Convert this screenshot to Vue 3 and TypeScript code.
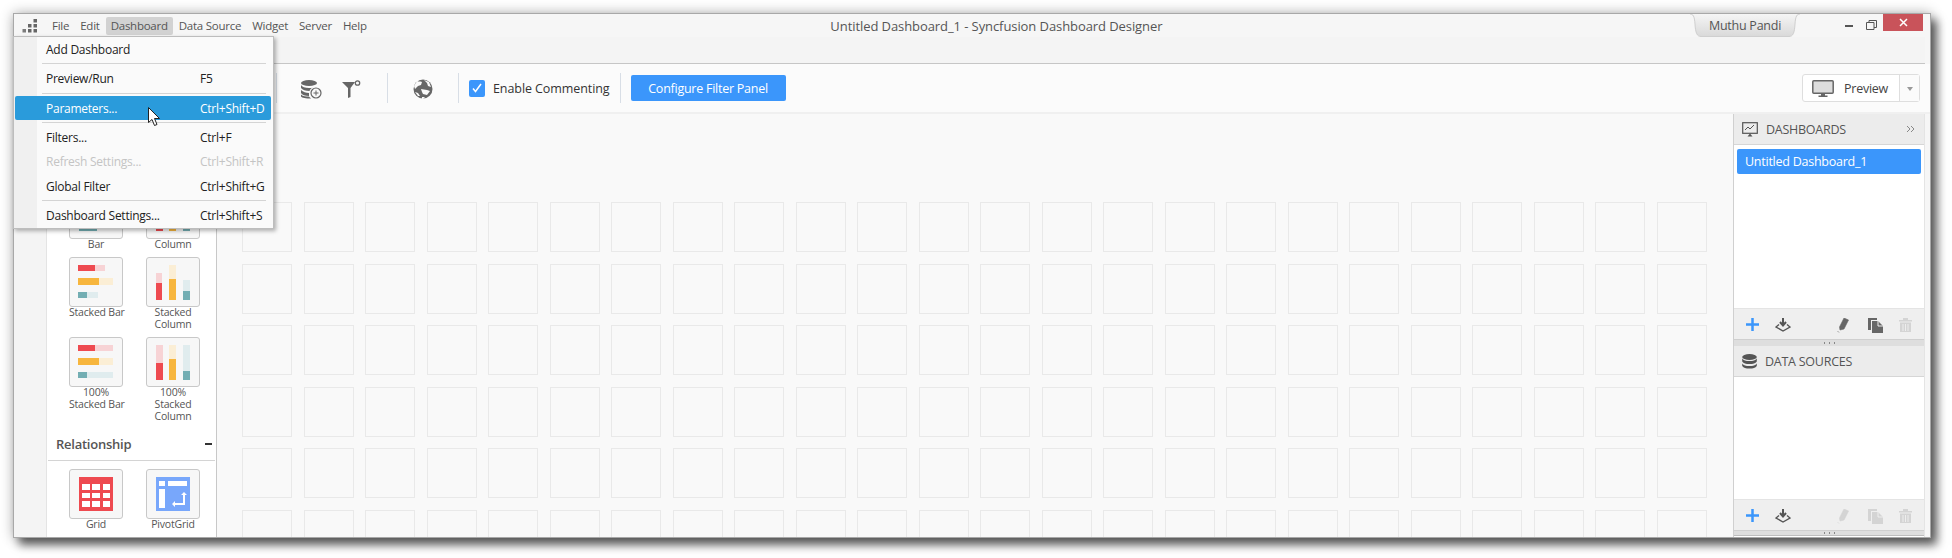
<script setup lang="ts">
interface MenuRow { label: string; key?: string; kind?: string; sepAfter?: boolean }
const topMenu = ['File', 'Edit', 'Dashboard', 'Data Source', 'Widget', 'Server', 'Help']
const rows: MenuRow[] = [
  { label: 'Add Dashboard', sepAfter: true },
  { label: 'Preview/Run', key: 'F5', kind: 'tall', sepAfter: true },
  { label: 'Parameters...', key: 'Ctrl+Shift+D', kind: 'active', sepAfter: true },
  { label: 'Filters...', key: 'Ctrl+F' },
  { label: 'Refresh Settings...', key: 'Ctrl+Shift+R', kind: 'disabled' },
  { label: 'Global Filter', key: 'Ctrl+Shift+G', sepAfter: true },
  { label: 'Dashboard Settings...', key: 'Ctrl+Shift+S' }
]
const cells = Array.from({ length: 144 }, (_, i) => i)
</script>

<template>
  <div class="page">
    <div class="window">
      <header class="titlebar">
        <svg class="logo" width="16" height="16" viewBox="0 0 16 16">
          <g fill="#666">
            <rect x="11.500" y="1" width="3.500" height="3.500" />
            <rect x="6" y="6" width="3.500" height="3.500" />
            <rect x="11.500" y="6" width="3.500" height="3.500" />
            <rect x=".5" y="11" width="3.500" height="3.500" opacity=".85" />
            <rect x="6" y="11" width="3.500" height="3.500" />
            <rect x="11.500" y="11" width="3.500" height="3.500" />
          </g>
        </svg>
        <nav class="topmenu">
          <span v-for="m in topMenu" :key="m" class="topitem" :class="{ open: m === 'Dashboard' }">{{ m }}</span>
        </nav>
        <div class="wintitle">Untitled Dashboard_1 - Syncfusion Dashboard Designer</div>
        <div class="user">
          <svg class="user-shape" width="110" height="23" viewBox="0 0 110 23">
            <defs>
              <linearGradient id="userfill" x1="0" y1="0" x2="0" y2="1">
                <stop offset="0" stop-color="#f5f5f5" />
                <stop offset="1" stop-color="#d9d9d9" />
              </linearGradient>
            </defs>
            <path d="M0 0C3 0 4.500 2 5 10C5.500 19 7 22.500 11 22.500H99C103 22.500 104.500 19 105 10C105.500 2 107 0 110 0" fill="url(#userfill)" stroke="#cfcfcf" />
          </svg>
          <span class="user-name">Muthu Pandi</span>
        </div>
        <div class="controls">
          <span class="min"></span>
          <svg class="restore" width="11" height="10" viewBox="0 0 11 10"><path d="M.5 2.500h7.500v7h-7.500zM3 2.500V.5h7.500v7H8" fill="none" stroke="#555" /></svg>
          <span class="close">
            <svg width="9" height="9" viewBox="0 0 9 9"><path d="M1 1l7 7M8 1L1 8" stroke="#fff" stroke-width="1.500" /></svg>
          </span>
        </div>
      </header>

      <div class="tabstrip"></div>

      <div class="toolbar">
        <span class="vsep"></span>
        <div class="tb-group first">
          <svg width="21" height="19" viewBox="0 0 21 19">
            <g fill="#666">
              <ellipse cx="8" cy="3" rx="8" ry="3" />
              <path d="M0 5c1 2 4 3 8 3 2 0 3 0 4.500-1-2 1-3.500 2-4 4-4 0-7-1-8.500-3zM0 10c2 2 5 3 8 3v3c-4 0-7-1-8-3zM0 14.500c2 2 5 2 8 2 0 0 1 1 2 2-5 0-9-.5-10-2z" />
            </g>
            <circle cx="15" cy="13" r="5" fill="#f9f9f9" stroke="#666" stroke-width="1.200" />
            <path d="M12.500 13h5M15 10.500v5" stroke="#666" />
          </svg>
          <svg width="19" height="19" viewBox="0 0 19 19">
            <path d="M0 2h13l-4.500 6v9l-2.500 1V8z" fill="#666" />
            <circle cx="15.500" cy="3" r="2.200" fill="none" stroke="#666" stroke-width="1.300" />
          </svg>
        </div>
        <span class="vsep"></span>
        <div class="tb-group globe">
          <svg width="20" height="21" viewBox="0 0 20 21">
            <circle cx="10" cy="10" r="9.500" fill="#666" />
            <path d="M4 2c2 1 3 0 5 1l-1 3-3 1-3 3-1-3zM11 1l5 2 2 5-3-1-1-3zM8 10l6 1 3 1-3 4-4-1-1-2zM2 13l3 1 2 3-2 0zM9 21l3-3h-3z" fill="#f9f9f9" />
          </svg>
        </div>
        <span class="vsep"></span>
        <label class="check">
          <span class="box">
            <svg width="12" height="12" viewBox="0 0 12 12"><path d="M2 6.500l2.500 3L10 2" fill="none" stroke="#fff" stroke-width="1.500" /></svg>
          </span>
          Enable Commenting
        </label>
        <span class="vsep tight"></span>
        <button class="configure">Configure Filter Panel</button>
        <div class="preview">
          <span class="preview-main">
            <svg width="22" height="17" viewBox="0 0 22 17">
              <rect x=".8" y=".8" width="20.400" height="12.400" rx="1" fill="#ddd" stroke="#666" stroke-width="1.500" />
              <path d="M9 14h4v1.500h2.500V17h-9v-1.500H9z" fill="#666" />
            </svg>
            Preview
          </span>
          <span class="preview-arrow"></span>
        </div>
      </div>

      <div class="workspace">
        <div class="rail"></div>
        <aside class="sidebar">
          <div class="tiles">
            <div class="tile-cell">
              <div class="tile"><svg width="34" height="34" viewBox="0 0 34 34"><rect x="0" y="31" width="18" height="3" fill="#73aeb3" /></svg></div>
              <div class="tile-label">Bar</div>
            </div>
            <div class="tile-cell">
              <div class="tile"><svg width="34" height="34" viewBox="0 0 34 34"><rect x="0" y="31" width="7" height="3" fill="#ee4a50" /><rect x="13" y="31" width="7" height="3" fill="#f7b63e" /><rect x="27" y="31" width="7" height="3" fill="#73aeb3" /></svg></div>
              <div class="tile-label">Column</div>
            </div>
            <div class="tile-cell">
              <div class="tile">
                <svg width="36" height="34" viewBox="0 0 36 34">
                  <rect x="0" y="0" width="27" height="6" fill="#f7d3d5" /><rect x="0" y="0" width="17" height="6" fill="#ee4a50" />
                  <rect x="0" y="13" width="35" height="7" fill="#fbeed5" /><rect x="0" y="13" width="21" height="7" fill="#f7b63e" />
                  <rect x="0" y="27" width="20" height="6" fill="#e0ecee" /><rect x="0" y="27" width="9" height="6" fill="#73aeb3" />
                </svg>
              </div>
              <div class="tile-label">Stacked Bar</div>
            </div>
            <div class="tile-cell">
              <div class="tile">
                <svg width="34" height="35" viewBox="0 0 34 35">
                  <rect x="0" y="8" width="6" height="27" fill="#f7d3d5" /><rect x="0" y="18" width="6" height="17" fill="#ee4a50" />
                  <rect x="13" y="0" width="7" height="35" fill="#fbeed5" /><rect x="13" y="14" width="7" height="21" fill="#f7b63e" />
                  <rect x="27" y="15" width="7" height="20" fill="#e0ecee" /><rect x="27" y="26" width="7" height="9" fill="#73aeb3" />
                </svg>
              </div>
              <div class="tile-label">Stacked<br />Column</div>
            </div>
            <div class="tile-cell">
              <div class="tile">
                <svg width="36" height="34" viewBox="0 0 36 34">
                  <rect x="0" y="0" width="35" height="6" fill="#f7d3d5" /><rect x="0" y="0" width="17" height="6" fill="#ee4a50" />
                  <rect x="0" y="13" width="35" height="7" fill="#fbeed5" /><rect x="0" y="13" width="21" height="7" fill="#f7b63e" />
                  <rect x="0" y="27" width="35" height="6" fill="#e0ecee" /><rect x="0" y="27" width="9" height="6" fill="#73aeb3" />
                </svg>
              </div>
              <div class="tile-label">100%<br />Stacked Bar</div>
            </div>
            <div class="tile-cell">
              <div class="tile">
                <svg width="34" height="35" viewBox="0 0 34 35">
                  <rect x="0" y="0" width="7" height="35" fill="#f7d3d5" /><rect x="0" y="18" width="7" height="17" fill="#ee4a50" />
                  <rect x="13" y="0" width="7" height="35" fill="#fbeed5" /><rect x="13" y="14" width="7" height="21" fill="#f7b63e" />
                  <rect x="27" y="0" width="7" height="35" fill="#e0ecee" /><rect x="27" y="26" width="7" height="9" fill="#73aeb3" />
                </svg>
              </div>
              <div class="tile-label">100%<br />Stacked<br />Column</div>
            </div>
          </div>
          <div class="section-head"><span>Relationship</span><i class="collapse"></i></div>
          <div class="tiles second">
            <div class="tile-cell">
              <div class="tile">
                <svg width="34" height="34" viewBox="0 0 34 34">
                  <rect width="34" height="34" fill="#ee4a50" />
                  <g fill="#fff">
                    <rect x="3" y="7" width="8" height="6" /><rect x="13" y="7" width="8" height="6" /><rect x="24" y="7" width="7" height="6" />
                    <rect x="3" y="16" width="8" height="5" /><rect x="13" y="16" width="8" height="5" /><rect x="24" y="16" width="7" height="5" />
                    <rect x="3" y="24" width="8" height="6" /><rect x="13" y="24" width="8" height="6" /><rect x="24" y="24" width="7" height="6" />
                  </g>
                </svg>
              </div>
              <div class="tile-label">Grid</div>
            </div>
            <div class="tile-cell">
              <div class="tile">
                <svg width="34" height="34" viewBox="0 0 34 34">
                  <rect width="34" height="34" fill="#78a7fb" />
                  <g fill="#fff">
                    <rect x="3" y="4" width="6" height="5" /><rect x="12" y="4" width="19" height="5" /><rect x="3" y="12" width="6" height="19" />
                    <path d="M19 26h8v-8h-2l3-3 3 3h-2v10h-10v2l-3-3 3-3z" />
                  </g>
                </svg>
              </div>
              <div class="tile-label">PivotGrid</div>
            </div>
            <div class="tile-cell"><div class="tile"></div></div>
            <div class="tile-cell"><div class="tile"></div></div>
          </div>
        </aside>

        <main class="canvas">
          <div class="cellgrid">
            <div v-for="c in cells" :key="c" class="cell"></div>
          </div>
        </main>

        <aside class="panel">
          <div class="panel-head">
            <svg width="16" height="16" viewBox="0 0 16 16">
              <rect x=".7" y="1.700" width="14.600" height="10.600" fill="none" stroke="#555" stroke-width="1.200" />
              <path d="M3 9l3-3 2 2 4-4" fill="none" stroke="#555" />
              <path d="M8 12.500l2.500 3h-5z" fill="#555" />
            </svg>
            <span>DASHBOARDS</span>
            <svg class="chev" width="9" height="8" viewBox="0 0 9 8"><path d="M1 1l3 3-3 3M5 1l3 3-3 3" fill="none" stroke="#888" /></svg>
          </div>
          <div class="panel-list">
            <div class="list-item">Untitled Dashboard_1</div>
          </div>
          <div class="panel-foot">
            <svg class="plus" width="13" height="13" viewBox="0 0 13 13"><path d="M0 6.500h13M6.500 0v13" stroke="#3b96fb" stroke-width="2.500" /></svg>
            <svg class="import" width="16" height="14" viewBox="0 0 16 14"><path d="M8 0v6M5 4l3 3.500L11 4" fill="none" stroke="#555" stroke-width="2" /><path d="M4 6.500L1 9l7 4 7-4-3-2.500" fill="none" stroke="#555" stroke-width="1.400" /></svg>
            <svg class="edit" width="12" height="15" viewBox="0 0 12 15"><path d="M7 0l4.500 2-4.500 9-4 1-.5-3zM.5 13l1.500 1.500" fill="#666" stroke="#666" stroke-width=".6" /></svg>
            <svg class="copy" width="15" height="15" viewBox="0 0 15 15"><path d="M0 0h9v2H3v10H0z" fill="#666" /><path d="M4 3h6l5 5v7H4z" fill="#666" /><path d="M10 3v5h5" fill="none" stroke="#eee" /></svg>
            <svg class="trash" width="13" height="14" viewBox="0 0 13 14"><path d="M0 2h13v1.500H0zM4 0h5v2H4zM1 4.500h11V14H1z" fill="#d4d4d4" /><path d="M4 6v7M6.500 6v7M9 6v7" stroke="#eee" /></svg>
          </div>
          <div class="splitter"><span class="dots"></span></div>
          <div class="panel-head second">
            <svg width="15" height="15" viewBox="0 0 15 15">
              <g fill="#555">
                <ellipse cx="7.500" cy="3" rx="7.300" ry="3" />
                <path d="M.2 4.500c1.500 2 3.500 2.500 7.300 2.500s5.800-.5 7.300-2.500v3c-1.500 2-3.500 2.500-7.300 2.500S1.700 9.500.2 7.500zM.2 9.500c1.500 2 3.500 2.500 7.300 2.500s5.800-.5 7.300-2.500V12c-1.500 2-3.500 2.500-7.300 2.500S1.700 14 .2 12z" />
              </g>
            </svg>
            <span>DATA SOURCES</span>
          </div>
          <div class="panel-list sources"></div>
          <div class="panel-foot">
            <svg class="plus" width="13" height="13" viewBox="0 0 13 13"><path d="M0 6.500h13M6.500 0v13" stroke="#3b96fb" stroke-width="2.500" /></svg>
            <svg class="import" width="16" height="14" viewBox="0 0 16 14"><path d="M8 0v6M5 4l3 3.500L11 4" fill="none" stroke="#555" stroke-width="2" /><path d="M4 6.500L1 9l7 4 7-4-3-2.500" fill="none" stroke="#555" stroke-width="1.400" /></svg>
            <svg class="edit" width="12" height="15" viewBox="0 0 12 15"><path d="M7 0l4.500 2-4.500 9-4 1-.5-3zM.5 13l1.500 1.500" fill="#d4d4d4" stroke="#d4d4d4" stroke-width=".6" /></svg>
            <svg class="copy" width="15" height="15" viewBox="0 0 15 15"><path d="M0 0h9v2H3v10H0z" fill="#d4d4d4" /><path d="M4 3h6l5 5v7H4z" fill="#d4d4d4" /><path d="M10 3v5h5" fill="none" stroke="#eee" /></svg>
            <svg class="trash" width="13" height="14" viewBox="0 0 13 14"><path d="M0 2h13v1.500H0zM4 0h5v2H4zM1 4.500h11V14H1z" fill="#d4d4d4" /><path d="M4 6v7M6.500 6v7M9 6v7" stroke="#eee" /></svg>
          </div>
          <div class="splitter last"><span class="dots"></span></div>
        </aside>
      </div>

      <div class="dropdown">
        <template v-for="r in rows" :key="r.label">
          <div class="ditem" :class="r.kind">
            <span class="dlabel">{{ r.label }}</span>
            <span class="dkey">{{ r.key }}</span>
          </div>
          <div v-if="r.sepAfter" class="dsep"></div>
        </template>
        <svg class="cursor" width="13" height="20" viewBox="0 0 13 20">
          <path d="M.5.5v15l3.500-3 2.500 6 2.500-1-2.500-6h5z" fill="#fff" stroke="#222" />
        </svg>
      </div>
    </div>
  </div>
</template>

<style>
html, body { margin: 0; background: #fff; }
</style>

<style scoped>
.page {
  width: 1952px;
  height: 558px;
  padding: 13px 0 0 13px;
  box-sizing: border-box;
  overflow: hidden;
  font-family: "Open Sans", "Noto Sans", sans-serif;
  font-size: 12px;
  letter-spacing: -0.25px;
  color: #333;
}
.window {
  position: relative;
  width: 1918px;
  height: 525px;
  box-sizing: border-box;
  border: 1px solid #a8a8a8;
  background: #f6f6f6;
  display: flex;
  flex-direction: column;
  box-shadow: 6px 7px 9px rgba(0, 0, 0, 0.6), 0 0 12px rgba(0, 0, 0, 0.3);
}
.titlebar {
  height: 23px;
  display: flex;
  align-items: center;
  padding-left: 8px;
  background: #f6f6f6;
  color: #555;
}
.logo { margin-right: 9px; flex: none; }
.topmenu { display: flex; font-size: 11.500px; }
.topitem { padding: 2px 5px; height: 14px; line-height: 14px; border-radius: 2px; margin-right: 1px; white-space: nowrap; }
.topitem.open { background: #d2d2d2; }
.wintitle { flex: 1; text-align: center; padding-right: 70px; color: #555; font-size: 13px; letter-spacing: -0.08px; white-space: nowrap; }
.user {
  position: relative;
  width: 110px;
  height: 23px;
  margin-right: 45px;
  flex: none;
  display: flex;
  align-items: center;
  justify-content: center;
  color: #555;
  font-size: 12.500px;
}
.user-shape { position: absolute; left: 0; top: 0; }
.user-name { position: relative; }
.controls { display: flex; align-items: flex-start; height: 23px; width: 78px; margin-right: 7px; flex: none; }
.min { width: 8px; height: 2px; background: #555; margin: 11px 13px 0 0; }
.restore { margin: 6px 6px 0 0; }
.close {
  width: 40px;
  height: 17px;
  background: #c9535a;
  display: flex;
  align-items: center;
  justify-content: center;
  flex: none;
}
.tabstrip {
  height: 27px;
  margin-right: 5px;
  box-sizing: border-box;
  border-bottom: 1px solid #c6c6c6;
  background: #f4f4f4;
}
.toolbar {
  height: 50px;
  box-sizing: border-box;
  display: flex;
  align-items: center;
  background: #fbfbfb;
  border-bottom: 2px solid #f0f0f0;
  padding-left: 262px;
}
.tb-group { display: flex; align-items: center; gap: 20px; margin-top: 2px; }
.tb-group.first { width: 110px; padding-left: 24px; box-sizing: border-box; }
.tb-group.globe { width: 70px; justify-content: center; }
.vsep { width: 1px; height: 30px; background: #d8dee6; flex: none; }
.vsep.tight { margin-left: 10px; }
.check { display: flex; align-items: center; gap: 8px; margin-left: 10px; font-size: 12.500px; letter-spacing: -0.08px; color: #333; white-space: nowrap; }
.box {
  width: 16px;
  height: 17px;
  background: #3b96fb;
  border-radius: 2px;
  display: flex;
  align-items: center;
  justify-content: center;
}
.configure {
  margin-left: 10px;
  width: 155px;
  height: 26px;
  background: #3b96fb;
  border: 0;
  border-radius: 2px;
  color: #fff;
  font: inherit;
  font-size: 12.500px;
  letter-spacing: -0.25px;
  padding: 0;
}
.preview {
  margin-left: auto;
  margin-right: 10px;
  display: flex;
  height: 28px;
  border: 1px solid #dedede;
  border-radius: 3px;
  background: #fff;
  box-sizing: border-box;
}
.preview-main {
  width: 97px;
  display: flex;
  align-items: center;
  gap: 10px;
  padding-left: 9px;
  box-sizing: border-box;
  border-right: 1px solid #dedede;
  font-size: 12.500px;
  color: #444;
}
.preview-arrow { width: 19px; position: relative; background: #fbfbfb; }
.preview-arrow::after {
  content: "";
  position: absolute;
  left: 7px;
  top: 12px;
  border: 3px solid transparent;
  border-top: 4px solid #999;
  border-bottom: 0;
}
.workspace { flex: 1; min-height: 0; display: flex; overflow: hidden; }
.rail { width: 32px; flex: none; background: #f4f4f4; border-right: 1px solid #e4e4e4; }
.sidebar {
  width: 169px;
  flex: none;
  background: #fff;
  border-right: 1px solid #c8c8c8;
  overflow: hidden;
}
.tiles {
  display: grid;
  grid-template-columns: 54px 54px;
  column-gap: 23px;
  row-gap: 6px;
  padding: 75px 0 0 22px;
}
.tiles.second { padding-top: 8px; }
.tile-cell { text-align: center; }
.tile {
  height: 50px;
  box-sizing: border-box;
  border: 1px solid #c8c8c8;
  border-radius: 3px;
  background: #f7f7f7;
  display: flex;
  align-items: center;
  justify-content: center;
}
.tile-label { font-size: 10.500px; line-height: 12px; margin-top: -1px; margin-bottom: 1px; color: #555; white-space: nowrap; letter-spacing: -0.2px; }
.section-head {
  height: 38px;
  margin: 0 1px;
  border-bottom: 1px solid #d4d4d4;
  display: flex;
  align-items: center;
  justify-content: space-between;
  padding: 5px 3px 0 8px;
  box-sizing: border-box;
  font-size: 13px;
  font-weight: 600;
  color: #555;
}
.collapse { width: 7px; height: 2px; background: #333; }
.canvas { flex: 1; min-width: 0; background: #f9f9f9; overflow: hidden; padding: 88px 0 0 25px; box-sizing: border-box; }
.cellgrid {
  display: grid;
  grid-template-columns: repeat(24, 50px);
  grid-auto-rows: 50px;
  gap: 11.500px;
}
.cell { box-sizing: border-box; border: 1px solid #e9e9e9; }
.panel {
  width: 192px;
  flex: none;
  margin-right: 5px;
  box-sizing: border-box;
  border-left: 1px solid #d0d0d0;
  border-right: 1px solid #e4e4e4;
  display: flex;
  flex-direction: column;
  background: #fff;
}
.panel-head {
  height: 31px;
  flex: none;
  box-sizing: border-box;
  background: #ececec;
  border-bottom: 1px solid #d6d6d6;
  display: flex;
  align-items: center;
  padding-left: 8px;
  gap: 8px;
  color: #555;
  font-size: 12.500px;
}
.chev { margin-left: auto; margin-right: 9px; }
.panel-list { height: 163px; flex: none; padding: 4px 3px; box-sizing: border-box; background: #fff; }
.panel-list.sources { height: 122px; }
.list-item {
  height: 25px;
  line-height: 25px;
  background: #3b96fb;
  color: #fff;
  border-radius: 2px;
  padding-left: 8px;
  font-size: 12.500px;
}
.panel-foot {
  height: 31px;
  flex: none;
  background: #efefef;
  box-sizing: border-box;
  border-top: 1px solid #e4e4e4;
  position: relative;
}
.panel-foot svg { position: absolute; top: 9px; }
.plus { left: 12px; }
.import { left: 41px; }
.edit { left: 103px; }
.copy { left: 134px; }
.trash { left: 165px; }
.splitter {
  height: 7px;
  flex: none;
  background: #dedede;
  border-top: 1px solid #cfcfcf;
  box-sizing: border-box;
  display: flex;
  justify-content: center;
  align-items: center;
}
.splitter.last { height: 6px; border-bottom: 1px solid #bdbdbd; }
.dots {
  width: 14px;
  height: 2px;
  background: radial-gradient(circle, #888 1px, transparent 1px) 0 0 / 5px 2px;
}
.dropdown {
  position: absolute;
  left: -1px;
  top: 22px;
  width: 261px;
  height: 193px;
  box-sizing: border-box;
  border: 1px solid #bdbdbd;
  background: linear-gradient(90deg, #f0f0f0 23px, #fafafa 23px);
  box-shadow: 2px 2px 4px rgba(0, 0, 0, 0.3);
  padding: 0 2px 0 1px;
  color: #222;
}
.ditem {
  height: 24px;
  display: flex;
  align-items: center;
  border-radius: 2px;
  padding-left: 31px;
}
.ditem.tall, .ditem.disabled { height: 25px; }
.ditem.active { background: #2a9bdb; color: #fff; }
.ditem.disabled { color: #c4c4c4; }
.dlabel { width: 154px; white-space: nowrap; }
.dkey { white-space: nowrap; }
.dsep { height: 1px; margin: 2px 5px 2px 27px; background: #d4d4d4; }
.cursor { position: absolute; left: 134px; top: 70px; }
</style>
